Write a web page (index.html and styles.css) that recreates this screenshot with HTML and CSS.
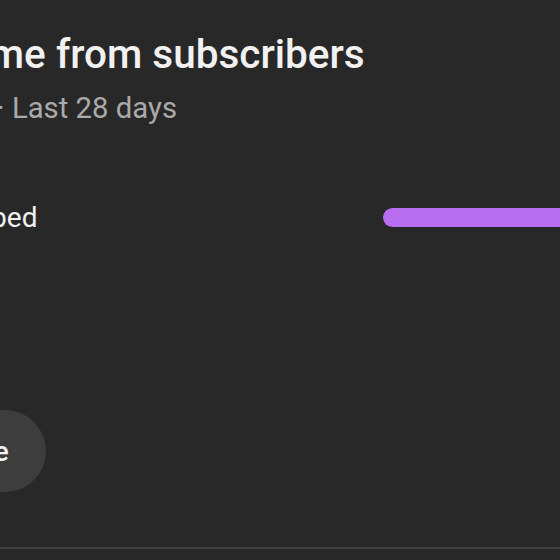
FILE: index.html
```html
<!DOCTYPE html>
<html>
<head>
<meta charset="utf-8">
<link rel="stylesheet" href="styles.css">
</head>
<body>
<div class="card">
  <div class="content">
    <h2 class="title">Watch time from subscribers</h2>
    <div class="subtitle">Watch time · Last 28 days</div>
    <div class="row">
      <div class="label">Not subscribed</div>
      <div class="bar"></div>
    </div>
    <button class="more">See more</button>
  </div>
  <div class="divider"></div>
</div>
</body>
</html>
```

FILE: styles.css
```css
html, body {
  margin: 0;
  padding: 0;
  background: #282828;
  overflow: hidden;
  width: 560px;
  height: 560px;
}
.card {
  display: flex;
  flex-direction: column;
  font-family: Roboto, "Noto Sans", sans-serif;
  color: #f1f1f1;
}
.content {
  display: flex;
  flex-direction: column;
  align-items: flex-start;
  margin-left: -152px;
  padding-top: 29px;
}
.title {
  margin: 0 0 0 -7px;
  font-size: 40.5px;
  line-height: 50px;
  font-weight: 500;
  white-space: nowrap;
}
.subtitle {
  margin: 11px 0 0 -6px;
  font-size: 29.3px;
  line-height: 36px;
  color: #aaaaaa;
  white-space: nowrap;
}
.row {
  margin-top: 72px;
  display: flex;
  align-items: flex-start;
  height: 36px;
}
.label {
  width: 535px;
  padding-top: 2px;
  font-size: 28px;
  line-height: 36px;
  white-space: nowrap;
}
.bar {
  margin-top: 10px;
  width: 320px;
  height: 19px;
  border-radius: 10px;
  background: #b96ef2;
}
.more {
  margin: 176px 0 0 6px;
  height: 82px;
  padding: 0 37px 0 36px;
  border: none;
  border-radius: 41px;
  background: #3d3d3d;
  color: #f1f1f1;
  font-family: Roboto, "Noto Sans", sans-serif;
  font-size: 28px;
  font-weight: 500;
  white-space: nowrap;
}
.divider {
  margin-top: 55px;
  height: 2px;
  background: #3f3f3f;
}
```
